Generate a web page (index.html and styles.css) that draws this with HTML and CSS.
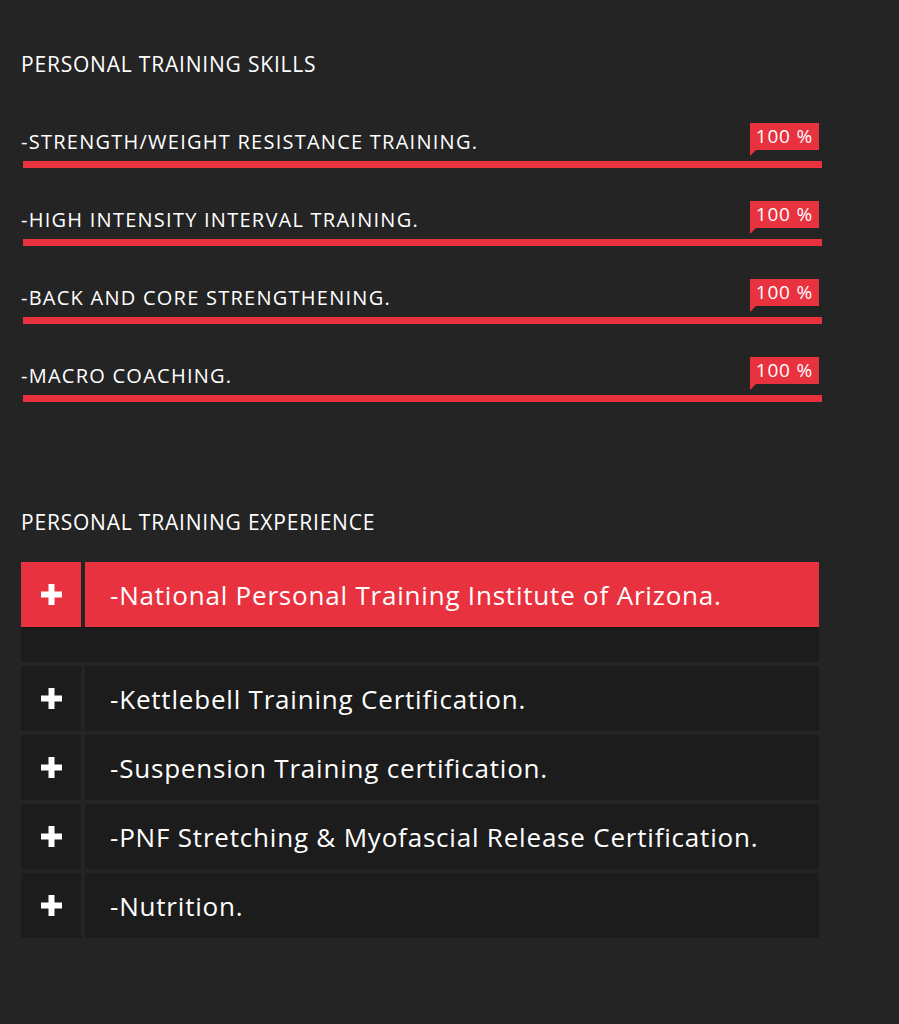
FILE: index.html
```html
<!DOCTYPE html>
<html lang="en">
<head>
  <meta charset="UTF-8" />
  <title>Personal Training</title>
  <meta content="width=device-width, initial-scale=1.0" name="viewport" />
  <link rel="stylesheet" href="styles.css">
</head>
<body>
  <div class="page">
    <section class="skills">
      <h2 class="section-title">PERSONAL TRAINING SKILLS</h2>

      <div class="skill">
        <div class="skill-head">
          <span class="skill-name">-STRENGTH/WEIGHT RESISTANCE TRAINING.</span>
          <span class="badge">100 %</span>
        </div>
        <div class="bar"><div class="bar-fill" style="width:100%"></div></div>
      </div>

      <div class="skill">
        <div class="skill-head">
          <span class="skill-name">-HIGH INTENSITY INTERVAL TRAINING.</span>
          <span class="badge">100 %</span>
        </div>
        <div class="bar"><div class="bar-fill" style="width:100%"></div></div>
      </div>

      <div class="skill">
        <div class="skill-head">
          <span class="skill-name">-BACK AND CORE STRENGTHENING.</span>
          <span class="badge">100 %</span>
        </div>
        <div class="bar"><div class="bar-fill" style="width:100%"></div></div>
      </div>

      <div class="skill">
        <div class="skill-head">
          <span class="skill-name">-MACRO COACHING.</span>
          <span class="badge">100 %</span>
        </div>
        <div class="bar"><div class="bar-fill" style="width:100%"></div></div>
      </div>
    </section>

    <section class="experience">
      <h2 class="section-title">PERSONAL TRAINING EXPERIENCE</h2>

      <div class="accordion">
        <div class="acc-item open">
          <div class="acc-head">
            <span class="acc-icon"><svg width="21" height="21" viewBox="0 0 21 21"><rect x="7.5" y="0" width="6" height="21" fill="#fff"/><rect x="0" y="7.5" width="21" height="6" fill="#fff"/></svg></span>
            <span class="acc-title">-National Personal Training Institute of Arizona.</span>
          </div>
          <div class="acc-body"></div>
        </div>

        <div class="acc-item">
          <div class="acc-head">
            <span class="acc-icon"><svg width="21" height="21" viewBox="0 0 21 21"><rect x="7.5" y="0" width="6" height="21" fill="#fff"/><rect x="0" y="7.5" width="21" height="6" fill="#fff"/></svg></span>
            <span class="acc-title">-Kettlebell Training Certification.</span>
          </div>
        </div>

        <div class="acc-item">
          <div class="acc-head">
            <span class="acc-icon"><svg width="21" height="21" viewBox="0 0 21 21"><rect x="7.5" y="0" width="6" height="21" fill="#fff"/><rect x="0" y="7.5" width="21" height="6" fill="#fff"/></svg></span>
            <span class="acc-title">-Suspension Training certification.</span>
          </div>
        </div>

        <div class="acc-item">
          <div class="acc-head">
            <span class="acc-icon"><svg width="21" height="21" viewBox="0 0 21 21"><rect x="7.5" y="0" width="6" height="21" fill="#fff"/><rect x="0" y="7.5" width="21" height="6" fill="#fff"/></svg></span>
            <span class="acc-title">-PNF Stretching &amp; Myofascial Release Certification.</span>
          </div>
        </div>

        <div class="acc-item">
          <div class="acc-head">
            <span class="acc-icon"><svg width="21" height="21" viewBox="0 0 21 21"><rect x="7.5" y="0" width="6" height="21" fill="#fff"/><rect x="0" y="7.5" width="21" height="6" fill="#fff"/></svg></span>
            <span class="acc-title">-Nutrition.</span>
          </div>
        </div>
      </div>
    </section>
  </div>
</body>
</html>
```

FILE: styles.css
```css
body { margin: 0; background: #242424; color: #fff; font-family: "Open Sans", Arial, sans-serif; }

.page {
  width: 798px;
  padding: 52px 0 86px 21px;
}

.section-title {
  margin: 0;
  font-size: 21px;
  font-weight: 400;
  line-height: 24px;
  letter-spacing: 0.8px;
}

/* skills */
.skills { padding-bottom: 75px; }
.skills .section-title { margin-bottom: 47px; }

.skill { margin-bottom: 33px; }

.skill-head {
  display: flex;
  justify-content: space-between;
  align-items: flex-end;
  height: 31px;
}

.skill-name {
  font-size: 20px;
  line-height: 24px;
  letter-spacing: 1.25px;
}

.badge {
  position: relative;
  background: #e8323f;
  color: #fff;
  font-size: 19px;
  letter-spacing: 0.8px;
  line-height: 27px;
  height: 27px;
  padding: 0 6px;
  align-self: flex-start;
}

.badge::after {
  content: '';
  position: absolute;
  left: 0;
  top: 100%;
  border-top: 6px solid #e8323f;
  border-right: 6px solid transparent;
}

.bar {
  margin: 7px 0 0 2px;
  width: 799px;
  height: 7px;
  background: #1a1a1a;
}

.bar-fill {
  height: 100%;
  background: #e8323f;
}

/* experience */
.experience .section-title { margin-bottom: 28px; }

.accordion {
  display: flex;
  flex-direction: column;
  gap: 4px;
}

.acc-head {
  display: flex;
  gap: 4px;
  height: 65px;
}

.acc-icon {
  width: 60px;
  flex: none;
  display: flex;
  align-items: center;
  justify-content: center;
  background: #1c1c1c;
}

.acc-title {
  flex: 1;
  display: flex;
  align-items: center;
  padding-left: 25px;
  background: #1c1c1c;
  font-size: 26px;
  letter-spacing: 0.8px;
}

.open .acc-icon,
.open .acc-title { background: #e8323f; }

.acc-body {
  height: 34px;
  background: #1c1c1c;
  border-top: 1px solid #151515;
}
```
